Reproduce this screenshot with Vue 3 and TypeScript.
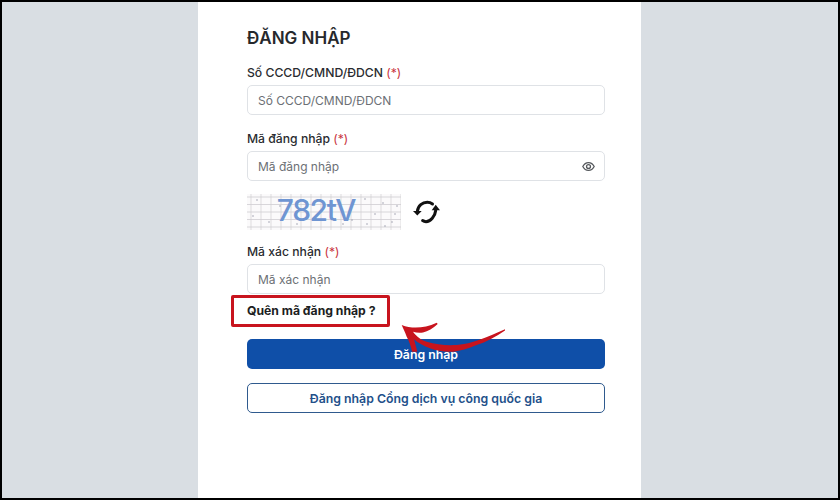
<script setup lang="ts">
const hLines = [0, 1, 2, 3, 4]
const vLines = Array.from({ length: 16 }, (_, i) => i)
const dots: [number, number][] = [
  [10, 6], [33, 12], [6, 22], [22, 28], [50, 30], [118, 5], [136, 9], [150, 12], [128, 20],
  [145, 28], [120, 30], [105, 26], [138, 32], [60, 8], [96, 30], [148, 20]
]
</script>

<template>
  <div class="frame">
    <main class="panel">
      <form class="form" @submit.prevent>
        <h1 class="title">ĐĂNG NHẬP</h1>

        <label class="label">Số CCCD/CMND/ĐDCN <span class="req">(*)</span></label>
        <div class="field"><input class="input" placeholder="Số CCCD/CMND/ĐDCN" /></div>

        <label class="label second">Mã đăng nhập <span class="req">(*)</span></label>
        <div class="field">
          <input class="input" placeholder="Mã đăng nhập" />
          <svg class="eye" viewBox="0 0 24 24" fill="none" stroke="#55585c" stroke-width="2.4">
            <path d="M1.5 12C4 7 7.6 4.8 12 4.8S20 7 22.5 12C20 17 16.4 19.2 12 19.2S4 17 1.5 12Z" />
            <circle cx="12" cy="12" r="3.6" />
          </svg>
        </div>

        <div class="captcha-row">
          <div class="captcha">
            <svg class="noise" viewBox="0 0 154 36">
              <line v-for="h in hLines" :key="'h' + h" x1="0" x2="154" :y1="3 + h * 7.5" :y2="3 + h * 7.5" stroke="#c9c5cb" stroke-width="0.7" />
              <line v-for="v in vLines" :key="'v' + v" y1="0" y2="36" :x1="4 + v * 10" :x2="4 + v * 10" stroke="#d3cfd3" stroke-width="0.7" />
              <circle v-for="(d, i) in dots" :key="i" :cx="d[0]" :cy="d[1]" r="0.8" fill="#a0a2b0" />
            </svg>
            <span class="code">782tV</span>
          </div>
          <svg class="refresh" viewBox="0 1 30 30" fill="none">
            <path d="M4.3 15.5C5 9.5 9.5 6.3 14.3 6.3c2 0 3.7.6 5.2 1.7" stroke="#111" stroke-width="3" stroke-linecap="round" />
            <path d="M22.7 14.5C22 20.5 17.5 25.7 13 25.7c-1.3 0-2.4-.4-3.4-1.1" stroke="#111" stroke-width="3" stroke-linecap="round" />
            <path d="M0 15h8.7l-4.4 4.6Z" fill="#111" />
            <path d="M18.7 14.2h8.3l-4.3-5.4Z" fill="#111" />
          </svg>
        </div>

        <label class="label third">Mã xác nhận <span class="req">(*)</span></label>
        <div class="field"><input class="input" placeholder="Mã xác nhận" /></div>

        <div class="forgot-row">
          <a class="forgot">Quên mã đăng nhập ?</a>
        </div>

        <button class="btn primary" type="button">Đăng nhập</button>
        <button class="btn outline" type="button">Đăng nhập Cổng dịch vụ công quốc gia</button>

        <svg class="arrow" viewBox="0 0 110 34" fill="#c8141e">
          <path d="M1.7 5 C12 9 24 8.5 36.7 2.7 L37.7 4 C33 8 28 11.5 23 12.5 C19 13 16 12.6 13 11.7 C17 17 21 20 26.7 21.7 C36 24.6 46 25.6 56.7 25 C72 24 88 17 105 9.3 L105 10.5 C96 17 86 22 76.7 25 C68 28.6 60 31 53.3 31.7 C44 32 36 31 30 28.3 C24 26 18 23 14 19.3 C15 23 16.5 28 17.3 31.7 L12 31.7 C11 26 9 21 6.7 16.7 C5 12 3 8 1.7 5Z" />
        </svg>
      </form>
    </main>
  </div>
</template>

<style>
html, body { margin: 0; padding: 0; }
</style>

<style scoped>
.frame {
  box-sizing: border-box;
  width: 840px;
  height: 500px;
  border: 2px solid #000;
  background: #d9dee3;
  display: flex;
  overflow: hidden;
  font-family: Inter, "Liberation Sans", sans-serif;
}
.panel {
  width: 443px;
  margin-left: 196px;
  background: #fff;
  flex: none;
}
.form {
  position: relative;
  width: 358px;
  margin-left: 49px;
  padding-top: 25px;
  display: flex;
  flex-direction: column;
}
.title {
  margin: 0;
  font-size: 17px;
  line-height: 22px;
  font-weight: 600;
  color: #26282c;
}
.label {
  margin-top: 16px;
  font-size: 12.2px;
  line-height: 16px;
  font-weight: 500;
  color: #2a2c30;
}
.label.second { margin-top: 16px; }
.label.third { margin-top: 14px; }
.req { color: #c8323c; font-weight: 400; }
.field { position: relative; margin-top: 4px; }
.input {
  box-sizing: border-box;
  display: block;
  width: 100%;
  height: 30px;
  padding: 0 10px;
  border: 1px solid #dfe2e6;
  border-radius: 5px;
  font: 400 12px Inter, "Liberation Sans", sans-serif;
  color: #333;
  background: #fff;
  outline: none;
}
.input::placeholder { color: #6c7075; opacity: 1; }
.eye {
  position: absolute;
  right: 10px;
  top: 9px;
  width: 13px;
  height: 13px;
}
.captcha-row {
  display: flex;
  align-items: center;
  gap: 12px;
  margin-top: 13px;
}
.captcha {
  position: relative;
  width: 154px;
  height: 36px;
  background: #fbfafb;
  display: flex;
  align-items: center;
  justify-content: center;
}
.noise { position: absolute; inset: 0; width: 100%; height: 100%; }
.code {
  position: relative;
  top: -2px;
  left: -8px;
  font-size: 30px;
  font-weight: 500;
  letter-spacing: -1.4px;
  color: #6f95d2;
}
.refresh { width: 30px; height: 30px; flex: none; }
.forgot-row {
  margin-top: 7px;
  line-height: 16px;
}
.forgot {
  display: inline-block;
  position: relative;
  font-size: 12.2px;
  line-height: 16px;
  font-weight: 700;
  color: #1c1e22;
}
.forgot::after {
  content: "";
  position: absolute;
  left: -16px;
  right: -15px;
  top: -8px;
  bottom: -8px;
  border: 3px solid #c8141e;
  border-radius: 2px;
}
.btn {
  box-sizing: border-box;
  display: block;
  width: 100%;
  height: 30px;
  border-radius: 5px;
  font: 600 12.3px Inter, "Liberation Sans", sans-serif;
}
.primary {
  margin-top: 20px;
  border: none;
  background: #0f4fa8;
  color: #fff;
}
.outline {
  margin-top: 14px;
  border: 1px solid #2f5a8e;
  background: #fff;
  color: #23508a;
}
.arrow {
  position: absolute;
  left: 153px;
  top: 318px;
  width: 110px;
  height: 34px;
}
</style>
